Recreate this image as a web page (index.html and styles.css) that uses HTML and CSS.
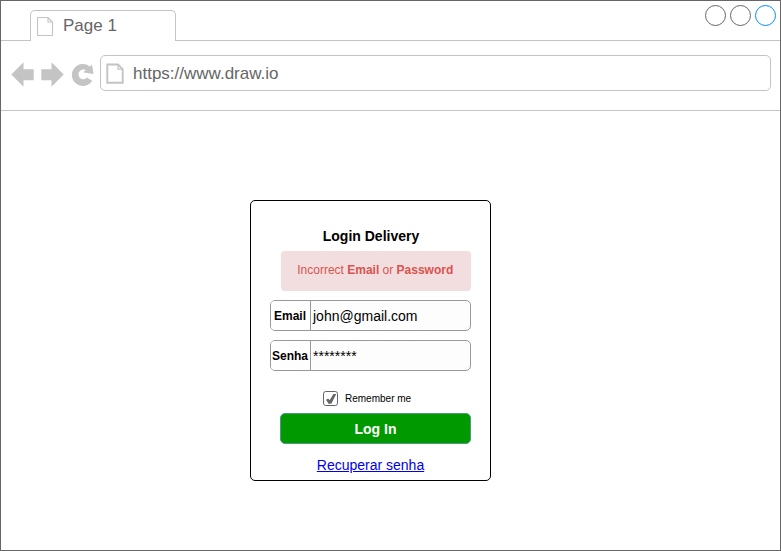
FILE: index.html
```html
<!DOCTYPE html>
<html lang="pt">
<head>
<meta charset="utf-8">
<title>Login Delivery</title>
<link rel="stylesheet" href="styles.css">
</head>
<body>
<div class="window">
  <header class="tabbar">
    <div class="tab">
      <svg class="tab-icon" width="17" height="20" viewBox="0 0 17 20"><path d="M.5 .5H11L15.5 5V18.5H.5ZM11 .5V5H15.5" fill="none" stroke="#c4c4c4" stroke-width="1.1"/></svg>
      <span>Page 1</span>
    </div>
    <div class="controls"><i class="control"></i><i class="control"></i><i class="control control-active"></i></div>
  </header>
  <nav class="toolbar">
    <svg class="nav-icons" width="84" height="26" viewBox="11 62 84 26">
      <g fill="#c4c4c4">
        <path d="M11.3 74.5L23.5 62.3V69.2H33.7V80.2H23.5V86.7Z"/>
        <path d="M63.7 74.5L51.5 62.3V69.2H41.3V80.2H51.5V86.7Z"/>
        <path d="M92 64.8L93.6 74L82.8 72.2L86 70.2A4.9 4.9 0 1 0 87 77.6L92.2 80.8A11 11 0 1 1 89.8 66.4Z"/>
      </g>
    </svg>
    <div class="address">
      <svg class="address-icon" width="18" height="21" viewBox="0 0 18 21"><path d="M1.3 1.5H12L16.7 6.2V19.7H1.3Z" fill="none" stroke="#c4c4c4" stroke-width="1.9"/><path d="M12 1.5V6.2H16.5" fill="none" stroke="#c4c4c4" stroke-width="1.2"/></svg>
      <span class="url">https://www.draw.io</span>
    </div>
  </nav>
  <main class="page">
    <form class="card">
      <h1 class="title">Login Delivery</h1>
      <p class="alert">Incorrect <b>Email</b> or <b>Password</b></p>
      <div class="field"><span class="label">Email</span><span class="value">john@gmail.com</span></div>
      <div class="field"><span class="label">Senha</span><span class="value">********</span></div>
      <div class="remember">
        <svg width="16" height="16" viewBox="0 0 16 16"><rect x=".5" y="1.5" width="14" height="14" rx="2.3" fill="#fff" stroke="#666"/><path d="M3 9.8L5.3 8.6L6.6 10.2L10.4 4H13.3L8.3 13.8H5.6Z" fill="#666"/></svg>
        <span>Remember me</span>
      </div>
      <div class="submit">Log In</div>
      <a class="recover" href="#">Recuperar senha</a>
    </form>
  </main>
</div>
</body>
</html>
```
FILE: styles.css
```css
* { box-sizing: border-box; }
body {
  margin: 0;
  background: #fff;
  font-family: "Liberation Sans", Arial, sans-serif;
  color: #000;
}
.window {
  width: 781px;
  height: 551px;
  border: 1px solid #666;
  overflow: hidden;
}
.tabbar {
  display: flex;
  justify-content: space-between;
  align-items: flex-start;
  height: 40px;
  padding: 9px 4px 0 29px;
  border-bottom: 1px solid #c4c4c4;
}
.tab {
  display: flex;
  align-items: flex-start;
  width: 146px;
  height: 31px;
  padding: 5px 0 0 6px;
  border: 1px solid #c4c4c4;
  border-bottom: 0;
  border-radius: 5px 5px 0 0;
  background: #fff;
  color: #666;
  font-size: 17px;
  line-height: 20px;
}
.tab-icon { margin: 1px 9px 0 0; }
.controls {
  display: flex;
  gap: 4px;
  margin-top: -5px;
}
.control {
  width: 21px;
  height: 21px;
  border: 1px solid #666;
  border-radius: 50%;
}
.control-active { border-color: #008cff; }
.toolbar {
  display: flex;
  align-items: flex-start;
  height: 70px;
  padding: 14px 9px 0 10px;
  border-bottom: 1px solid #c4c4c4;
}
.nav-icons {
  flex: none;
  margin: 7px 5px 0 0;
}
.address {
  display: flex;
  align-items: flex-start;
  flex: 1;
  height: 36px;
  padding: 7px 0 0 5px;
  border: 1px solid #c4c4c4;
  border-radius: 5px;
  color: #666;
  font-size: 17px;
  line-height: 20px;
}
.address-icon { margin: 0 9px 0 0; }
.url { padding-top: 1px; }
.page {
  display: flex;
  padding: 89px 0 0 249px;
}
.card {
  width: 241px;
  height: 281px;
  padding: 27px 19px 0;
  border: 1px solid #000;
  border-radius: 5px;
}
.title {
  margin: 0;
  padding-left: 1px;
  font-size: 14px;
  line-height: 16px;
  text-align: center;
}
.alert {
  height: 40px;
  margin: 6.5px 0 9.5px 10.5px;
  padding-right: 1px;
  border-radius: 4px;
  background: #f2dede;
  color: #d9534f;
  font-size: 12px;
  line-height: 38px;
  text-align: center;
}
.field {
  display: flex;
  height: 31px;
  margin-bottom: 9px;
  border: 1px solid #999;
  border-radius: 5px;
  background: #fdfdfd;
  overflow: hidden;
}
.label {
  width: 40px;
  padding-right: 1px;
  border-right: 1px solid #999;
  background: #fff;
  font-size: 12px;
  font-weight: bold;
  line-height: 30px;
  text-align: center;
}
.value {
  padding-left: 2px;
  font-size: 14px;
  line-height: 30px;
}
.remember {
  display: flex;
  align-items: center;
  gap: 6px;
  height: 16px;
  margin: 19px 0 7px 53px;
  font-size: 10px;
}
.submit {
  height: 31px;
  margin-left: 10px;
  border: 1px solid #4d9a80;
  border-radius: 5px;
  background: #090;
  color: #fff;
  font-size: 14px;
  font-weight: bold;
  line-height: 30px;
  text-align: center;
}
.recover {
  display: block;
  margin-top: 13px;
  color: #00e;
  font-size: 14px;
  line-height: 16px;
  text-align: center;
}
```
